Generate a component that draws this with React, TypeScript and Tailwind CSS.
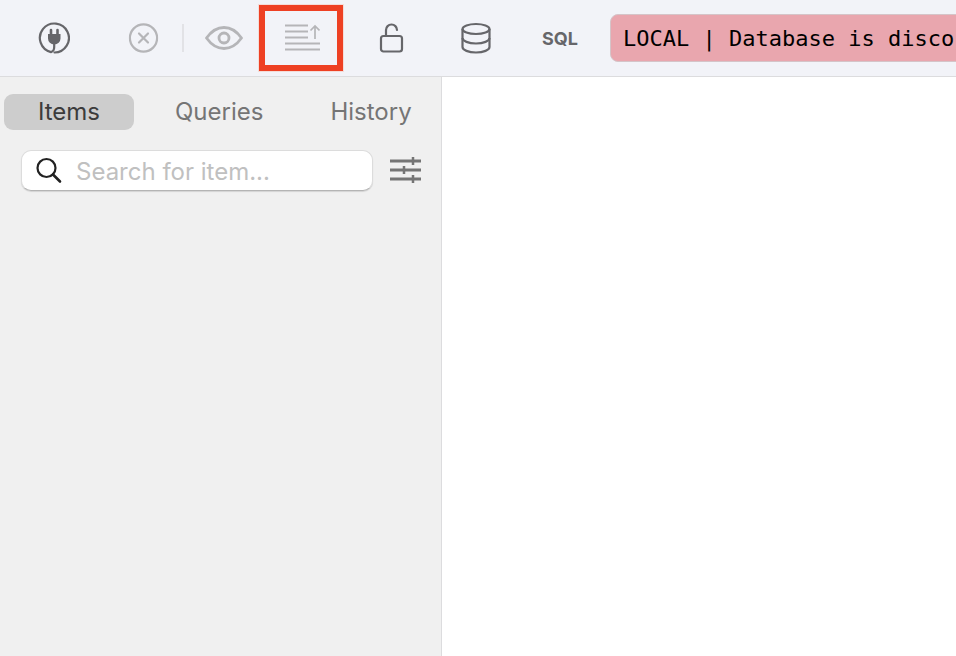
export default function App() {
  return (
    <div className="w-[956px] h-[656px] overflow-hidden flex flex-col bg-white font-['Inter',sans-serif]">
      {/* Toolbar */}
      <div className="h-[77px] shrink-0 flex items-center bg-[#f2f3f8] border-b border-[#dcdcde] pb-px">
        <svg className="ml-[38px] w-[32px] h-[32px]" viewBox="0 0 32 32" fill="none">
          <path d="M13 30.1A14.5 14.5 0 1 1 16.5 30.5" stroke="#66666a" strokeWidth="2.2" strokeLinecap="round" />
          <path d="M10 12h12.500v4.500a6.250 6 0 0 1-12.500 0z" fill="#66666a" />
          <path d="M13 8v4M19.500 8v4" stroke="#66666a" strokeWidth="2.600" strokeLinecap="round" />
          <path d="M16.200 21v4c0 3-1 4.500-3.200 5" stroke="#66666a" strokeWidth="2.200" strokeLinecap="round" />
        </svg>
        <svg className="ml-[58px] w-[30px] h-[30px] translate-x-[0.5px]" viewBox="0 0 30 30" fill="none" stroke="#b5b5b8" strokeWidth="2.200" strokeLinecap="round">
          <circle cx="15" cy="15" r="13.600" />
          <path d="M10.500 10.500l9 9M19.500 10.500l-9 9" />
        </svg>
        <div className="ml-[24px] w-[2px] h-[28px] bg-[#e2e2e6]" />
        <svg className="ml-[21px] w-[38px] h-[26px]" viewBox="0 0 38 26" fill="none" stroke="#b5b5b8" strokeWidth="2.800">
          <path d="M1.500 13C6.500 6 12.500 2.500 19 2.500S31.500 6 36.500 13C31.500 20 25.500 23.500 19 23.500S6.500 20 1.500 13z" strokeLinejoin="round" />
          <circle cx="19" cy="13" r="5" />
        </svg>
        <div className="ml-[16px] w-[84px] h-[66px] border-[6px] border-[#ee4023] flex items-center justify-center outline outline-1 outline-[#f4dcd8]">
          <svg className="ml-[3px] w-[35px] h-[27px]" viewBox="0 0 35 27" fill="none" stroke="#b5b5b8" strokeWidth="2.200">
            <path d="M0 1.500h23M0 7.500h23M0 13.500h23M0 19.500h35M0 25.500h35" />
            <path d="M30 15V2M25.500 6.500L30 2L34.500 6.500" strokeWidth="1.700" />
          </svg>
        </div>
        <svg className="ml-[36px] w-[26px] h-[30px]" viewBox="0 0 26 30" fill="none" stroke="#66666a" strokeWidth="2.200" strokeLinejoin="round">
          <rect x="2" y="13" width="21" height="15.500" rx="2.500" />
          <path d="M7 13V7a5.500 5.500 0 0 1 11 0" strokeLinecap="round" />
        </svg>
        <svg className="ml-[55px] w-[32px] h-[32px]" viewBox="0 0 32 32" fill="none" stroke="#66666a" strokeWidth="2.200">
          <ellipse cx="16" cy="7" rx="13.500" ry="5" />
          <path d="M2.500 7v18c0 3 6 5.500 13.500 5.500S29.500 28 29.500 25V7" />
          <path d="M2.500 16c0 3 6 5.500 13.500 5.500S29.500 19 29.500 16" />
        </svg>
        <span className="ml-[50px] w-[38px] pt-[2px] text-[18px] leading-none font-bold text-[#66666a]">SQL</span>
        <div className="ml-[30px] flex-1 h-[48px] -mr-[20px] min-w-0 pl-[12px] pt-[2px] flex items-center rounded-l-[8px] bg-[#e9a6ae] border border-[#d5c4c8] overflow-hidden">
          <span className="font-['DejaVu_Sans_Mono',monospace] text-[22px] text-black whitespace-nowrap">LOCAL | Database is disco</span>
        </div>
      </div>

      <div className="flex-1 flex min-h-0">
        {/* Sidebar */}
        <div className="w-[442px] shrink-0 bg-[#f0f0f0] border-r border-[#dcdcde]">
          <div className="mt-[17px] ml-[4px] flex items-center h-[36px] text-[24px] text-[#757575]">
            <div className="w-[130px] h-full rounded-[9px] bg-[#cdcdcd] flex items-center justify-center text-[#3c3c3c]">Items</div>
            <div className="ml-[41px]">Queries</div>
            <div className="ml-[67px]">History</div>
          </div>
          <div className="mt-[20px] ml-[21px] flex items-center">
            <div className="w-[352px] h-[41px] rounded-[10px] bg-white border border-[#dcdcdc] border-b-[#b4b4b4] shadow-[0_1px_1px_rgba(0,0,0,0.12)] flex items-center">
              <svg className="ml-[13px] w-[27px] h-[27px]" viewBox="0 0 27 27" fill="none" stroke="#222" strokeWidth="2.200" strokeLinecap="round">
                <circle cx="11.500" cy="11" r="9" />
                <path d="M18 17.500l7 7" strokeWidth="2.600" />
              </svg>
              <span className="ml-[14px] pt-[3px] text-[24px] text-[#c0c0c0]">Search for item...</span>
            </div>
            <svg className="ml-[17px] -mt-[2px] w-[31px] h-[28px]" viewBox="0 0 31 28" fill="none" stroke="#757575" strokeWidth="3">
              <path d="M0 5h31M0 14h31M0 23h31" />
              <path d="M23 1v8M14 10v8M23 19v8" strokeWidth="2.500" />
            </svg>
          </div>
        </div>
        <div className="flex-1 bg-white" />
      </div>
    </div>
  );
}
